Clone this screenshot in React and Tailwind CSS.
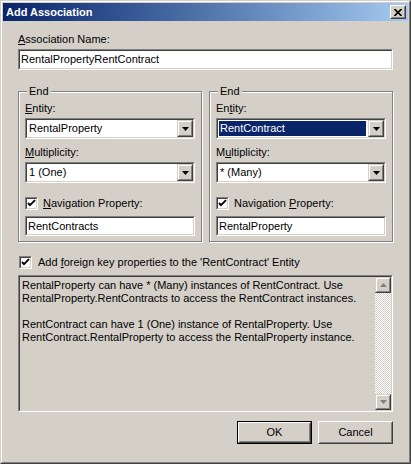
import React from "react";

const font = { fontFamily: '"Liberation Sans", Arial, sans-serif' };

function Sunken({ className = "", innerClass = "", children }) {
  return (
    <div className={`border border-t-[#808080] border-l-[#808080] border-r-white border-b-white ${className}`}>
      <div className={`h-full border border-t-[#404040] border-l-[#404040] border-r-[#d4d0c8] border-b-[#d4d0c8] ${innerClass}`}>
        {children}
      </div>
    </div>
  );
}

function RaisedSmall({ className = "", children }) {
  return (
    <div className={`border border-t-[#d4d0c8] border-l-[#d4d0c8] border-r-[#404040] border-b-[#404040] bg-[#d4d0c8] ${className}`}>
      <div className="h-full border border-t-white border-l-white border-r-[#808080] border-b-[#808080] flex items-center justify-center">
        {children}
      </div>
    </div>
  );
}

function DownArrow({ color = "#000" }) {
  return (
    <svg width="7" height="4" viewBox="0 0 7 4">
      <polygon points="0,0 7,0 3.5,4" fill={color} />
    </svg>
  );
}

function Check() {
  return (
    <Sunken className="w-[13px] h-[13px] shrink-0" innerClass="bg-white flex items-center justify-center">
      <svg width="9" height="9" viewBox="0 0 9 9">
        <path d="M1 4 L3 6.2 L8 1.2" stroke="#000" strokeWidth="1.9" fill="none" />
      </svg>
    </Sunken>
  );
}

function Combo({ value, selected }) {
  return (
    <Sunken className="h-[21px]" innerClass="bg-white flex items-stretch p-[1px]">
      <div
        className={`flex-1 flex items-center pl-[1px] mr-[2px] text-[11px] ${
          selected ? "bg-[#0a246a] text-white" : "text-black"
        }`}
      >
        {value}
      </div>
      <RaisedSmall className="w-[16px] -my-[1px] -mr-[1px]">
        <DownArrow />
      </RaisedSmall>
    </Sunken>
  );
}

function TextBox({ value, className = "" }) {
  return (
    <Sunken className={className} innerClass="bg-white flex items-center pl-[1px] text-[11px] text-black">
      {value}
    </Sunken>
  );
}

function Label({ children, className = "" }) {
  return <div className={`h-[13px] leading-[13px] text-[11px] text-black ${className}`}>{children}</div>;
}

function EndGroup({ entity, entityLabel, multLabel, mult, navLabel, nav, selected }) {
  return (
    <div className="relative border border-[#808080] shadow-[1px_1px_0_#fff,inset_1px_1px_0_#fff] px-[6px] pt-[10px] h-[151px]">
      <div className="absolute left-[8px] -top-[7px] bg-[#d4d0c8] px-[2px] text-[11px] leading-[13px] text-black">
        End
      </div>
      <Label>{entityLabel}</Label>
      <div className="mt-[3px]">
        <Combo value={entity} selected={selected} />
      </div>
      <Label className="mt-[7px]">{multLabel}</Label>
      <div className="mt-[3px]">
        <Combo value={mult} />
      </div>
      <div className="mt-[14px] flex items-center gap-[5px]">
        <Check />
        <Label>{navLabel}</Label>
      </div>
      <TextBox value={nav} className="mt-[6px] h-[20px]" />
    </div>
  );
}

function PushButton({ children, isDefault }) {
  const inner = (
    <div className="h-full border border-t-white border-l-white border-r-[#404040] border-b-[#404040]">
      <div className="h-full border border-t-[#d4d0c8] border-l-[#d4d0c8] border-r-[#808080] border-b-[#808080] flex items-center justify-center text-[11px] text-black">
        {children}
      </div>
    </div>
  );
  return (
    <div className={`w-[75px] h-[23px] bg-[#d4d0c8] ${isDefault ? "border border-black" : ""}`}>{inner}</div>
  );
}

export default function App() {
  return (
    <div style={font} className="w-[411px] h-[464px] bg-[#d4d0c8]">
      <div className="h-full border border-t-[#d4d0c8] border-l-[#d4d0c8] border-r-[#404040] border-b-[#404040]">
        <div className="h-full border border-t-white border-l-white border-r-[#808080] border-b-[#808080] p-[1px] flex flex-col">
          {/* Title bar */}
          <div className="h-[18px] bg-gradient-to-r from-[#0a246a] to-[#a6caf0] flex items-center pl-[3px] pr-[2px]">
            <span className="text-[11px] font-bold text-white leading-none">Add Association</span>
            <div className="ml-auto w-[16px] h-[14px] border border-t-white border-l-white border-r-[#404040] border-b-[#404040] bg-[#d4d0c8]">
              <div className="h-full border border-t-[#d4d0c8] border-l-[#d4d0c8] border-r-[#808080] border-b-[#808080] flex items-center justify-center">
                <svg width="8" height="7" viewBox="0 0 8 7">
                  <path d="M0.5 0 L7.5 7 M7.5 0 L0.5 7" stroke="#000" strokeWidth="1.6" />
                </svg>
              </div>
            </div>
          </div>

          {/* Content */}
          <div className="px-[15px] flex flex-col">
            <Label className="mt-[12px]">
              <span className="underline">A</span>ssociation Name:
            </Label>
            <TextBox value="RentalPropertyRentContract" className="mt-[3px] h-[21px]" />

            <div className="mt-[21px] grid grid-cols-2 gap-[7px]">
              <EndGroup
                entityLabel={<><span className="underline">E</span>ntity:</>}
                entity="RentalProperty"
                multLabel={<><span className="underline">M</span>ultiplicity:</>}
                mult="1 (One)"
                navLabel={<><span className="underline">N</span>avigation Property:</>}
                nav="RentContracts"
              />
              <EndGroup
                entityLabel={<>En<span className="underline">t</span>ity:</>}
                entity="RentContract"
                selected
                multLabel={<>M<span className="underline">u</span>ltiplicity:</>}
                mult="* (Many)"
                navLabel={<>Navigation <span className="underline">P</span>roperty:</>}
                nav="RentalProperty"
              />
            </div>

            <div className="mt-[14px] ml-[1px] flex items-center gap-[6px]">
              <Check />
              <Label>
                Add <span className="underline">f</span>oreign key properties to the 'RentContract' Entity
              </Label>
            </div>

            <Sunken className="mt-[6px] h-[137px]" innerClass="flex bg-[#d4d0c8]">
              <div className="flex-1 pl-[2px] pt-[2px] text-[11px] leading-[13px] text-black">
                <div>RentalProperty can have * (Many) instances of RentContract. Use</div>
                <div>RentalProperty.RentContracts to access the RentContract instances.</div>
                <div className="h-[13px]" />
                <div>RentContract can have 1 (One) instance of RentalProperty. Use</div>
                <div>RentContract.RentalProperty to access the RentalProperty instance.</div>
              </div>
              <div className="w-[16px] flex flex-col">
                <RaisedSmall className="h-[16px]">
                  <svg width="7" height="5" viewBox="0 0 7 5">
                    <polygon points="3.5,0 7,4 0,4" fill="#808080" />
                  </svg>
                </RaisedSmall>
                <div className="flex-1 bg-[repeating-conic-gradient(#ffffff_0_25%,#d4d0c8_0_50%)] bg-[length:2px_2px]" />
                <RaisedSmall className="h-[16px]">
                  <svg width="7" height="5" viewBox="0 0 7 5">
                    <polygon points="0,0 7,0 3.5,4" fill="#808080" />
                  </svg>
                </RaisedSmall>
              </div>
            </Sunken>

            <div className="mt-[9px] flex justify-end gap-[6px]">
              <PushButton isDefault>OK</PushButton>
              <PushButton>Cancel</PushButton>
            </div>
          </div>
        </div>
      </div>
    </div>
  );
}
